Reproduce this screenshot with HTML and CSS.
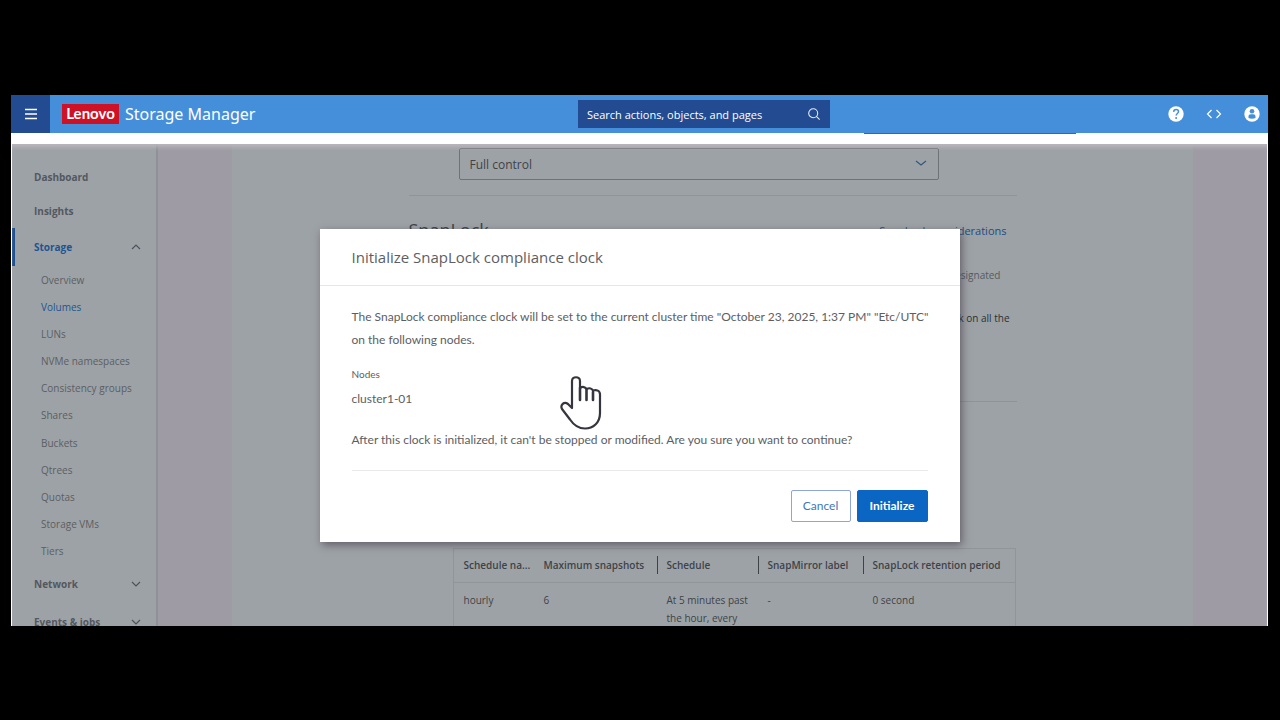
FILE: index.html
```html
<!DOCTYPE html>
<html lang="en">
<head>
<meta charset="UTF-8">
<meta name="viewport" content="width=device-width, initial-scale=1.0">
<title>Lenovo Storage Manager</title>
<link rel="stylesheet" href="styles.css">
</head>
<body>
    <div class="app">
        <header class="topbar">
            <div class="brand">
                <button type="button" class="menu-btn" aria-label="Menu">
                    <svg width="12" height="12" viewBox="0 0 12 12" stroke="#fff" stroke-width="1.5"><path d="M0 1.5h12M0 6h12M0 10.5h12"/></svg>
                </button>
                <span class="logo">Lenovo</span>
                <span class="product">Storage Manager</span>
            </div>
            <div class="search">
                <input type="text" placeholder="Search actions, objects, and pages" aria-label="Search">
                <svg width="12" height="12" viewBox="0 0 12 12" fill="none" stroke="#e4ecf8" stroke-width="1.1"><circle cx="5.2" cy="5.2" r="4.5"/><path d="M8.4 8.4l3.2 3.2"/></svg>
            </div>
            <div class="actions">
                <button type="button" aria-label="Help">
                    <svg width="16" height="16" viewBox="0 0 16 16"><circle cx="8" cy="8" r="7.7" fill="#fff"/><path d="M5.6 5.9c.1-1.5 1.1-2.4 2.5-2.4 1.4 0 2.4.9 2.4 2.1 0 1.9-2.3 1.9-2.3 3.9" fill="none" stroke="#458fda" stroke-width="1.5"/><circle cx="8.1" cy="11.9" r="1" fill="#458fda"/></svg>
                </button>
                <button type="button" aria-label="API log">
                    <svg width="16" height="16" viewBox="0 0 16 16" fill="none" stroke="#fff" stroke-width="1.2"><path d="M5.5 4L1.5 8l4 4M10.5 4l4 4-4 4"/></svg>
                </button>
                <button type="button" aria-label="Account">
                    <svg width="16" height="16" viewBox="0 0 16 16"><circle cx="8" cy="8" r="7.7" fill="#fff"/><circle cx="8" cy="5.3" r="2.3" fill="#458fda"/><path d="M4.5 12V10.5c0-1.6 1-2.3 2.2-2.3h2.6c1.2 0 2.2.7 2.2 2.3V12c-1.8 1-5.2 1-7 0z" fill="#458fda"/></svg>
                </button>
            </div>
        </header>
        <div class="strip"><div class="strip-edge"></div></div>

        <div class="workspace">
            <nav class="sidebar">
                <a href="#" class="section">Dashboard</a>
                <a href="#" class="section">Insights</a>
                <a href="#" class="section current">Storage
                    <svg width="10" height="6" viewBox="0 0 10 6"><path d="M1 5l4-4 4 4"/></svg>
                </a>
                <div class="submenu">
                    <a href="#">Overview</a>
                    <a href="#" class="selected">Volumes</a>
                    <a href="#">LUNs</a>
                    <a href="#">NVMe namespaces</a>
                    <a href="#">Consistency groups</a>
                    <a href="#">Shares</a>
                    <a href="#">Buckets</a>
                    <a href="#">Qtrees</a>
                    <a href="#">Quotas</a>
                    <a href="#">Storage VMs</a>
                    <a href="#">Tiers</a>
                </div>
                <a href="#" class="section closed">Network
                    <svg width="10" height="6" viewBox="0 0 10 6"><path d="M1 1l4 4 4-4"/></svg>
                </a>
                <a href="#" class="section closed">Events &amp; jobs
                    <svg width="10" height="6" viewBox="0 0 10 6"><path d="M1 1l4 4 4-4"/></svg>
                </a>
            </nav>

            <main class="main">
                <div class="page">
                    <div class="content">
                        <div class="select-wrap">
                            <select aria-label="Permission">
                                <option>Full control</option>
                            </select>
                            <svg width="12" height="6" viewBox="0 0 12 6"><path d="M1 1l5 4 5-4"/></svg>
                        </div>
                        <section class="snaplock">
                            <div class="snaplock-head">
                                <h2>SnapLock</h2>
                                <a href="#">SnapLock considerations</a>
                            </div>
                            <p class="hint">designated</p>
                            <p class="note">clock on all the</p>
                        </section>
                        <table class="schedules">
                            <thead>
                                <tr>
                                    <th class="c-name">Schedule na...</th>
                                    <th class="c-max">Maximum snapshots</th>
                                    <th class="c-sched split"><span>Schedule</span></th>
                                    <th class="c-label split"><span>SnapMirror label</span></th>
                                    <th class="split"><span>SnapLock retention period</span></th>
                                </tr>
                            </thead>
                            <tbody>
                                <tr>
                                    <td>hourly</td>
                                    <td>6</td>
                                    <td>At 5 minutes past the hour, every</td>
                                    <td>-</td>
                                    <td>0 second</td>
                                </tr>
                            </tbody>
                        </table>
                    </div>
                </div>
            </main>

            <div class="overlay">
                <div class="modal" role="dialog" aria-labelledby="modal-title">
                    <h1 id="modal-title">Initialize SnapLock compliance clock</h1>
                    <div class="modal-body">
                        <p>The SnapLock compliance clock will be set to the current cluster time "October 23, 2025, 1:37 PM" "Etc/UTC" on the following nodes.</p>
                        <div class="nodes-label">Nodes</div>
                        <div class="node">cluster1-01</div>
                        <p class="warning">After this clock is initialized, it can't be stopped or modified. Are you sure you want to continue?</p>
                        <div class="buttons">
                            <button type="button" class="cancel">Cancel</button>
                            <button type="button" class="primary">Initialize</button>
                        </div>
                    </div>
                    <!-- hand pointer -->
                    <svg class="pointer" width="42" height="56" viewBox="0 0 42 56" fill="#fff" stroke="#35353f" stroke-width="2.2" stroke-linejoin="round" stroke-linecap="round">
                        <path d="M12 33V6c0-5 8-5 8 0v7c3-2 5-1 6.5 1 3-1.5 5.5-.5 6.5 1.5 3.5-1 7 0 7 4V38c0 10-7 15.5-15 15.5-7 0-11-3-15-9L2 34c-2-4 2-8 6-5z"/>
                        <path d="M20 13v12M26.5 15v10M33 17v8" stroke-width="2.6"/>
                    </svg>
                </div>
            </div>
        </div>
    </div>
</body>
</html>
```
FILE: styles.css
```css
* {
    box-sizing: border-box;
}

body {
    margin: 0;
    height: 100vh;
    padding: 95px 12px 94px 11px;
    background-color: #000;
    font-family: "Open Sans", "Noto Sans", sans-serif;
    font-size: 12px;
    color: #5c5e63;
    display: flex;
}

a {
    color: inherit;
    text-decoration: none;
}

button, input, select {
    font-family: inherit;
    font-size: 12px;
}

h1, h2, p {
    margin: 0;
    font-weight: normal;
}

.app {
    flex: 1;
    min-width: 0;
    display: flex;
    flex-direction: column;
    overflow: hidden;
    background-color: #fff;
}

/* top bar */
.topbar {
    flex: none;
    height: 38px;
    display: grid;
    grid-template-columns: 1fr 252px 438px;
    align-items: center;
    background-color: #458fda;
    color: #fff;
}

.brand {
    display: flex;
    align-items: center;
}

.menu-btn {
    width: 39px;
    height: 38px;
    padding: 0;
    border: none;
    background-color: #224b92;
    display: grid;
    place-items: center;
}

.logo {
    width: 57px;
    height: 20px;
    margin: 0 6px 0 12px;
    background-color: #cf1126;
    font-family: Lato, sans-serif;
    font-weight: bold;
    font-size: 15px;
    line-height: 19px;
    text-align: center;
}

.product {
    font-family: "Noto Sans", sans-serif;
    font-size: 16px;
    line-height: 24px;
}

.search {
    height: 28px;
    padding: 0 10px 0 9px;
    display: flex;
    align-items: center;
    background-color: #224b92;
}

.search input {
    flex: 1;
    min-width: 0;
    padding: 0;
    border: none;
    outline: none;
    background: none;
    color: #fff;
    font-size: 11px;
}

.search input::placeholder {
    color: #fff;
}

.actions {
    display: flex;
    justify-content: flex-end;
    gap: 22px;
    padding-right: 8px;
}

.actions button {
    display: flex;
    padding: 0;
    border: none;
    background: none;
}

.strip {
    flex: none;
    height: 11px;
}

.strip-edge {
    width: 212px;
    height: 1px;
    margin-left: auto;
    margin-right: 192px;
    background-color: #4f6183;
}

.workspace {
    position: relative;
    flex: 1;
    min-height: 0;
    display: flex;
    overflow: hidden;
    margin: 0 1px;
    background-color: #9da2a6;
}

/* sidebar */
.sidebar {
    flex: none;
    width: 146px;
    padding-top: 16px;
    border-right: 2px solid #8c9296;
    font-size: 10px;
}

.section {
    height: 34px;
    padding: 0 15px 0 22px;
    display: flex;
    align-items: center;
    justify-content: space-between;
    font-weight: bold;
    color: #53585f;
}

.section.current {
    height: 38px;
    padding-left: 19px;
    border-left: 3px solid #1e4f8c;
    color: #1e5590;
}

.section.closed {
    height: 38px;
}

.section svg,
.select-wrap svg {
    fill: none;
    stroke: #4c535a;
    stroke-width: 1.2;
}

.submenu {
    height: 299px;
    display: grid;
    grid-auto-rows: 1fr;
    align-items: center;
    padding-left: 29px;
}

.submenu .selected {
    color: #1e5590;
}

/* page behind the dialog */
.main {
    flex: 1;
    min-width: 0;
    padding: 0 74px;
    background-color: #9e9ba5;
}

.page {
    height: 100%;
    background-color: #9da2a6;
}

.content {
    width: 608px;
    margin: 0 auto;
    padding-top: 4px;
    color: #3d4349;
}

.select-wrap {
    position: relative;
    width: 480px;
    margin-left: 50px;
}

.select-wrap select {
    appearance: none;
    display: block;
    width: 100%;
    height: 32px;
    padding: 0 10px;
    border: 1px solid #6d7379;
    border-radius: 2px;
    background: none;
    color: #3d4349;
}

.select-wrap svg {
    position: absolute;
    right: 12px;
    top: 12px;
    stroke: #31577e;
}

.snaplock {
    height: 207px;
    margin-top: 15px;
    padding-top: 20px;
    border: solid #8e9498;
    border-width: 1px 0;
}

.snaplock-head {
    display: flex;
    justify-content: space-between;
    padding-right: 10px;
    line-height: 30px;
}

.snaplock-head h2 {
    font-size: 18px;
    line-height: 28px;
}

.snaplock-head a {
    color: #234c82;
    font-size: 11px;
}

.hint,
.note {
    font-size: 10px;
    line-height: 18px;
    text-align: right;
}

.hint {
    margin-top: 20px;
    padding-right: 16px;
    color: #555b61;
}

.note {
    margin-top: 25px;
    padding-right: 7px;
    color: #2b3036;
}

.schedules {
    width: 563px;
    margin: 146px 0 0 44px;
    table-layout: fixed;
    border-collapse: separate;
    border-spacing: 0;
    border: 1px solid #8f9599;
    font-size: 10px;
    line-height: 18px;
}

.schedules th,
.schedules td {
    padding: 7px 0 8px 10px;
    text-align: left;
    vertical-align: top;
}

.schedules th {
    border-bottom: 1px solid #8f9599;
    font-weight: 600;
    white-space: nowrap;
}

.schedules td {
    padding-top: 8px;
}

.schedules th.split {
    padding-left: 0;
}

.split span {
    display: block;
    padding-left: 9px;
    border-left: 1px solid #3d4349;
}

.c-name {
    width: 80px;
}

.c-max {
    width: 123px;
}

.c-sched {
    width: 101px;
}

.c-label {
    width: 105px;
}

/* dialog */
.overlay {
    position: absolute;
    inset: 0;
    display: flex;
    align-items: center;
    justify-content: center;
    box-shadow: inset 0 5px 4px -2px #bab7bd;
}

.modal {
    position: relative;
    width: 640px;
    background-color: #fff;
    box-shadow: 2px 3px 8px rgba(60, 50, 65, 0.6);
}

.modal h1 {
    padding: 0 32px;
    border-bottom: 1px solid #e6e6e8;
    font-size: 15px;
    line-height: 56px;
}

.modal-body {
    padding: 19px 31px 20px 32px;
    font-family: Lato, sans-serif;
    line-height: 23px;
}

.nodes-label {
    margin-top: 13px;
    font-size: 10px;
    line-height: 20px;
}

.node {
    margin-top: 3px;
}

.warning {
    margin-top: 18px;
}

.buttons {
    margin: 19px 1px 0 0;
    padding-top: 19px;
    border-top: 1px solid #e9e9eb;
    display: flex;
    justify-content: flex-end;
    gap: 6px;
}

.buttons button {
    height: 32px;
    padding: 0;
    border-radius: 2px;
}

.cancel {
    width: 60px;
    border: 1px solid #8fa3dc;
    background-color: #fff;
    color: #3d78bd;
}

.primary {
    width: 71px;
    border: 1px solid #0b65c2;
    background-color: #0b65c2;
    color: #fff;
    font-weight: bold;
}

.pointer {
    position: absolute;
    left: 240px;
    top: 146px;
}
```
